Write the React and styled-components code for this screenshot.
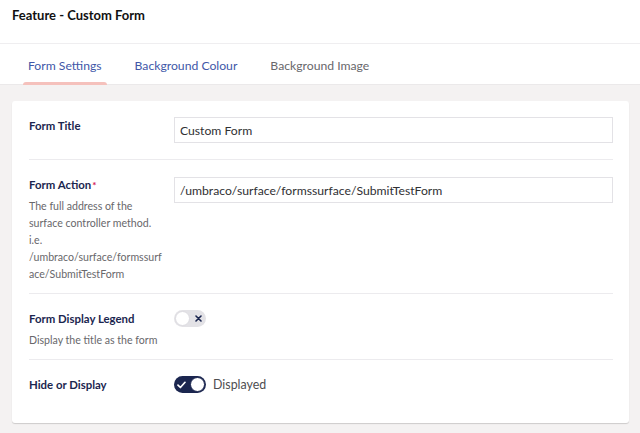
import React from 'react'
import styled, { createGlobalStyle } from "styled-components";

const Global = createGlobalStyle`
html, body {
    margin: 0;
    padding: 0;
    background: #f4f2f2;
    font-family: Lato, "Open Sans", sans-serif;
    color: #1b264f;
}
`;

const Page = styled.div`
width: 640px;
height: 433px;
display: flex;
flex-direction: column;
background: #f4f2f2;
overflow: hidden;
`;

const Header = styled.div`
flex-shrink: 0;
height: 44px;
padding: 7px 12px 0;
box-sizing: border-box;
background: #fff;
border-bottom: 1px solid #efeef0;
font-size: 13px;
font-weight: 700;
color: #111;
`;

const Tabs = styled.div`
flex-shrink: 0;
height: 41px;
box-sizing: border-box;
display: flex;
background: #fff;
padding-left: 23px;
border-bottom: 1px solid #ebe9ea;
`;

const Tab = styled.div`
position: relative;
display: flex;
align-items: center;
padding: 2px 5px 0;
margin-right: 23px;
font-size: 12.2px;
color: ${p => p.$muted ? "#68676b" : "#4157a8"};
&::after {
    content: "";
    display: ${p => p.$active ? "block" : "none"};
    position: absolute;
    left: 0;
    right: 0;
    bottom: -1px;
    height: 3px;
    border-radius: 3px 3px 0 0;
    background: #f5c1bc;
}
`;

const Body = styled.div`
padding: 16px 11px 0 12px;
`;

const Card = styled.div`
background: #fff;
border-radius: 3px;
box-shadow: 0 1px 1px rgba(0, 0, 0, 0.16);
padding: 0 16px 14px 17px;
`;

const Row = styled.div`
display: grid;
grid-template-columns: 145px 1fr;
align-items: ${p => p.$center ? "center" : "start"};
padding: 16px 0;
border-bottom: ${p => p.$last ? "none" : "1px solid #ecebee"};
`;

const Label = styled.div`
font-size: 11.4px;
font-weight: 700;
color: #1b264f;
line-height: 16px;
padding-top: 1px;
`;

const Required = styled.span`
color: #d42054;
font-size: 10px;
vertical-align: top;
margin-left: 1px;
`;

const Description = styled.div`
font-size: 10.6px;
color: #68676b;
line-height: 17px;
margin: 5px 0 -6px;
width: 135px;
overflow-wrap: anywhere;
`;

const Input = styled.div`
height: 26px;
box-sizing: border-box;
border: 1px solid #e3e2e6;
display: flex;
align-items: center;
padding: 0 5px;
margin-top: ${p => p.$offset || 0}px;
font-size: 12.2px;
color: #303033;
`;

const ToggleLine = styled.div`
display: flex;
align-items: center;
gap: 7px;
font-size: 12.4px;
color: #4d4d50;
`;

const Track = styled.div`
width: 32px;
height: 17px;
border-radius: 9px;
box-sizing: border-box;
background: ${p => p.$on ? "#1b264f" : "#e3e2e6"};
display: flex;
align-items: center;
justify-content: space-between;
flex-direction: ${p => p.$on ? "row-reverse" : "row"};
padding: 0 1px;
`;

const Knob = styled.div`
width: 15px;
height: 15px;
border-radius: 50%;
background: #fff;
box-sizing: border-box;
border: 1px solid ${p => p.$on ? "#1b264f" : "#dcdbe0"};
`;

const Mark = styled.div`
width: 13px;
display: flex;
justify-content: center;
`;

const Toggle = ({ on }) => (
    <Track $on={on}>
        <Knob $on={on} />
        <Mark>
            {on ? (
                <svg width="9" height="8" viewBox="0 0 9 8">
                    <path d="M1 4.2 L3.4 6.5 L8 1.3" fill="none" stroke="#fff" strokeWidth="1.7" strokeLinecap="round" strokeLinejoin="round" />
                </svg>
            ) : (
                <svg width="7" height="7" viewBox="0 0 7 7">
                    <path d="M1 1 L6 6 M6 1 L1 6" fill="none" stroke="#1b264f" strokeWidth="1.6" strokeLinecap="round" />
                </svg>
            )}
        </Mark>
    </Track>
)

const App = () => {
    return (
        <Page>
            <Global />
            <Header>Feature - Custom Form</Header>
            <Tabs>
                <Tab $active>Form Settings</Tab>
                <Tab>Background Colour</Tab>
                <Tab $muted>Background Image</Tab>
            </Tabs>
            <Body>
                <Card>
                    <Row>
                        <Label>Form Title</Label>
                        <Input>Custom Form</Input>
                    </Row>
                    <Row>
                        <div>
                            <Label>Form Action<Required>*</Required></Label>
                            <Description>
                                The full address of the surface controller method. i.e.
                                /umbraco/surface/formssurface/SubmitTestForm
                            </Description>
                        </div>
                        <Input $offset={1}>/umbraco/surface/formssurface/SubmitTestForm</Input>
                    </Row>
                    <Row>
                        <div>
                            <Label>Form Display Legend</Label>
                            <Description>Display the title as the form</Description>
                        </div>
                        <ToggleLine><Toggle /></ToggleLine>
                    </Row>
                    <Row $last $center>
                        <Label>Hide or Display</Label>
                        <ToggleLine><Toggle on />Displayed</ToggleLine>
                    </Row>
                </Card>
            </Body>
        </Page>
    )
}

export default App
